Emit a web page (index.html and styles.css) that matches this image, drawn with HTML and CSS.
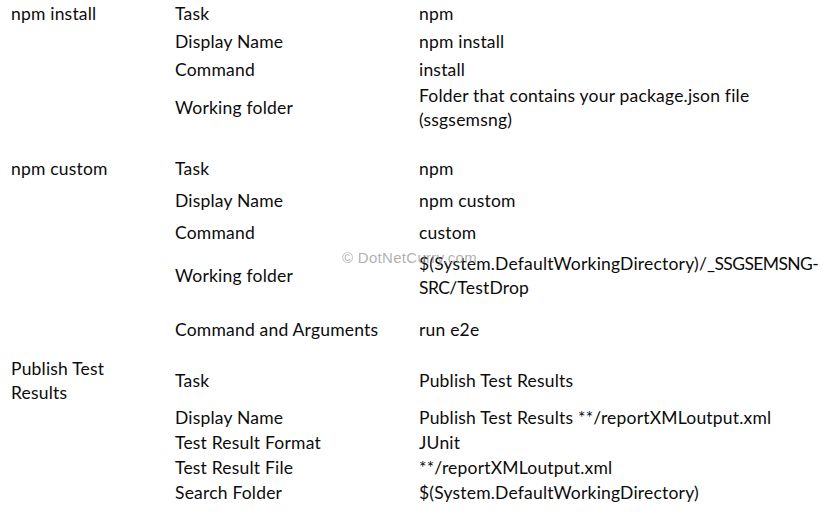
FILE: index.html
```html
<!DOCTYPE html>
<html>
<head>
<meta charset="utf-8">
<link rel="stylesheet" href="styles.css">
</head>
<body>
<div class="sheet">
  <div class="row h27"><div class="c1">npm install</div><div class="c2">Task</div><div class="c3">npm</div></div>
  <div class="row h29"><div class="c1"></div><div class="c2">Display Name</div><div class="c3">npm install</div></div>
  <div class="row h28"><div class="c1"></div><div class="c2">Command</div><div class="c3">install</div></div>
  <div class="row h46"><div class="c1"></div><div class="c2">Working folder</div><div class="c3">Folder that contains your package.json file<br>(ssgsemsng)</div></div>

  <div class="row h28 group"><div class="c1">npm custom</div><div class="c2">Task</div><div class="c3">npm</div></div>
  <div class="row h36"><div class="c1"></div><div class="c2">Display Name</div><div class="c3">npm custom</div></div>
  <div class="row h28"><div class="c1"></div><div class="c2">Command</div><div class="c3">custom</div></div>
  <div class="row h58"><div class="c1"></div><div class="c2">Working folder</div><div class="c3">$(System.DefaultWorkingDirectory)/<span class="caps">_SSGSEMSNG-</span><br><span class="caps">SRC</span>/TestDrop</div></div>
  <div class="row h50"><div class="c1"></div><div class="c2">Command and Arguments</div><div class="c3">run e2e</div></div>

  <div class="row h48 gap2"><div class="c1">Publish Test<br>Results</div><div class="c2">Task</div><div class="c3">Publish Test Results</div></div>
  <div class="row h26"><div class="c1"></div><div class="c2">Display Name</div><div class="c3">Publish Test Results **/reportXMLoutput.xml</div></div>
  <div class="row h24"><div class="c1"></div><div class="c2">Test Result Format</div><div class="c3">JUnit</div></div>
  <div class="row h25"><div class="c1"></div><div class="c2">Test Result File</div><div class="c3">**/reportXMLoutput.xml</div></div>
  <div class="row h26"><div class="c1"></div><div class="c2">Search Folder</div><div class="c3">$(System.DefaultWorkingDirectory)</div></div>

  <div class="watermark">© DotNetCurry.com</div>
</div>
</body>
</html>
```
FILE: styles.css
```css
html, body {
  margin: 0;
  padding: 0;
  background: #ffffff;
}
body {
  width: 831px;
  height: 518px;
  overflow: hidden;
  font-family: Lato, "Open Sans", sans-serif;
  font-size: 17.5px;
  letter-spacing: 0.2px;
  color: #0c0c0c;
}
.sheet {
  position: relative;
  padding-left: 11px;
}
.row {
  display: grid;
  grid-template-columns: 164px 244px 1fr;
  align-items: center;
  line-height: 24px;
}
.group { margin-top: 25px; }
.gap2 { margin-top: 2px; }
.h24 { height: 24px; }
.h25 { height: 25px; }
.h26 { height: 26px; }
.h27 { height: 27px; }
.h28 { height: 28px; }
.h29 { height: 29px; }
.h36 { height: 36px; }
.h46 { height: 46px; }
.h48 { height: 48px; }
.h50 { height: 50px; }
.h58 { height: 58px; }
.c3 { white-space: nowrap; }
.caps { letter-spacing: -0.6px; }
.watermark {
  position: absolute;
  left: 342px;
  top: 249px;
  font-family: "Liberation Sans", Arial, sans-serif;
  font-size: 15px;
  letter-spacing: 0.3px;
  color: rgba(150, 150, 150, 0.75);
  white-space: nowrap;
}
```
